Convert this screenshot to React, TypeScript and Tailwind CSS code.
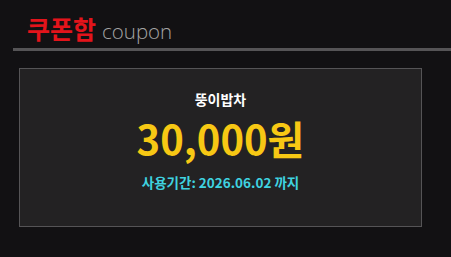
export default function App() {
  const font = { fontFamily: '"Noto Sans CJK KR", "Noto Sans", sans-serif' };
  return (
    <div className="w-[451px] h-[257px] bg-[#121113] overflow-hidden" style={font}>
      <div className="flex items-end h-[48px] pl-[27px] pb-[7px] gap-[6px]">
        <span className="text-[#e3141b] font-bold text-[25px] leading-none">쿠폰함</span>
        <span className="text-[#a4a4a4] font-light text-[20.5px] leading-none" style={{ fontFamily: '"Open Sans", "Noto Sans", sans-serif' }}>coupon</span>
      </div>
      <div className="ml-[13px] h-[3px] bg-[#555456]" />
      <div className="ml-[19px] mt-[17px] w-[403px] h-[159px] bg-[#232223] border border-[#555456] flex flex-col items-center pt-[20px]">
        <div className="text-white font-bold text-[14px] leading-[20px]">뚱이밥차</div>
        <div className="text-[#f7c814] font-bold text-[40px] leading-[48px] mt-[5px]">30,000원</div>
        <div className="text-[#3fd3e0] font-bold text-[13.5px] leading-[18px] mt-[11px]">사용기간: 2026.06.02 까지</div>
      </div>
    </div>
  );
}
